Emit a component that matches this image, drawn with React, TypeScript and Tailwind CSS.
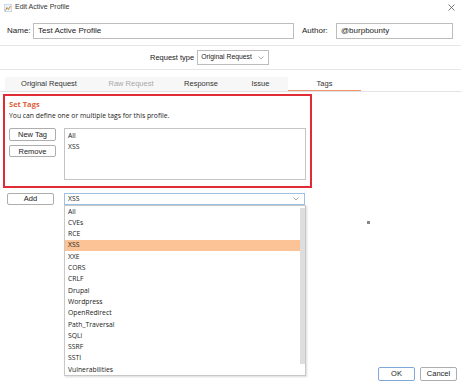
import React from "react";

const tags = [
  "All",
  "CVEs",
  "RCE",
  "XSS",
  "XXE",
  "CORS",
  "CRLF",
  "Drupal",
  "Wordpress",
  "OpenRedirect",
  "Path_Traversal",
  "SQLi",
  "SSRF",
  "SSTI",
  "Vulnerabilities",
];

function Btn({ label, className = "" }: { label: string; className?: string }) {
  return (
    <div
      className={`flex items-center justify-center rounded-[2px] border border-[#adadad] bg-white text-[7.5px] text-[#222] ${className}`}
    >
      {label}
    </div>
  );
}

function Chevron() {
  return (
    <svg width="6" height="4" viewBox="0 0 6 4" className="shrink-0">
      <path d="M0.5 0.5 L3 3 L5.5 0.5" fill="none" stroke="#8a8a8a" strokeWidth="0.7" />
    </svg>
  );
}

const listFont = { fontFamily: '"Open Sans", "Noto Sans", sans-serif' };

export default function App() {
  return (
    <div
      className="relative flex h-[384px] w-[461px] flex-col overflow-hidden bg-white text-[#222]"
      style={{ fontFamily: '"Liberation Sans", Arial, sans-serif' }}
    >
      {/* title bar */}
      <div className="flex h-[15px] items-center pl-[4px] pr-[6px]">
        <svg width="8" height="8" viewBox="0 0 8 8" className="shrink-0">
          <rect x="0" y="0" width="8" height="8" fill="#c9d8ea" />
          <rect x="1" y="1" width="6" height="6" fill="#eef3f8" />
          <path d="M1.5 6.5 L3 3.5 L4.5 5.5 L6.5 2" stroke="#c48a3a" strokeWidth="1" fill="none" />
        </svg>
        <span className="ml-[3px] text-[7px] text-[#333]">Edit Active Profile</span>
        <svg width="7" height="7" viewBox="0 0 7 7" className="ml-auto">
          <path d="M0.5 0.5 L6.5 6.5 M6.5 0.5 L0.5 6.5" stroke="#555" strokeWidth="0.8" />
        </svg>
      </div>

      {/* name / author */}
      <div className="mt-[8px] flex h-[16px] items-center pl-[7px] text-[8px]">
        <span className="w-[26px]">Name:</span>
        <div className="flex h-full w-[261px] items-center border border-[#bdbdbd] pl-[4px]">
          Test Active Profile
        </div>
        <span className="ml-[8px] w-[34px]">Author:</span>
        <div className="flex h-full w-[117px] items-center border border-[#bdbdbd] pl-[4px]">
          @burpbounty
        </div>
      </div>

      <div className="mt-[6px] h-px bg-[#e6e6e6]" />

      {/* request type */}
      <div className="mt-[4px] flex h-[15px] items-center whitespace-nowrap pl-[150px] text-[7.5px]">
        <span>Request type</span>
        <div className="ml-[3px] flex h-full w-[72px] items-center justify-between border border-[#bdbdbd] pl-[3px] pr-[4px]">
          <span className="text-[6.8px]">Original Request</span>
          <Chevron />
        </div>
      </div>

      <div className="mt-[4px] h-px bg-[#e6e6e6]" />

      {/* tabs */}
      <div className="ml-[5px] mt-[7px] flex h-[14px] w-[356px] bg-[#f7f7f7] text-[7.5px] text-[#333]">
        <div className="flex w-[88px] items-center justify-center">Original Request</div>
        <div className="flex w-[76px] items-center justify-center text-[#a8a8a8]">Raw Request</div>
        <div className="flex w-[64px] items-center justify-center">Response</div>
        <div className="flex w-[55px] items-center justify-center">Issue</div>
        <div className="flex w-[73px] items-center justify-center border-b border-[#f0926a] bg-white">Tags</div>
      </div>
      <div className="h-px bg-[#e3e3e3]" />

      {/* set tags box */}
      <div className="ml-[3px] mt-[2px] h-[94px] w-[309px] border-2 border-[#e12b35] pl-[4px] pt-[3px]">
        <div className="text-[7.5px] font-bold text-[#e0603a]" style={listFont}>
          Set Tags
        </div>
        <div className="mt-[1px] text-[6.8px]" style={listFont}>
          You can define one or multiple tags for this profile.
        </div>
        <div className="mt-[7px] flex">
          <div className="flex flex-col gap-[4px]">
            <Btn label="New Tag" className="h-[13px] w-[47px]" />
            <Btn label="Remove" className="h-[12px] w-[47px]" />
          </div>
          <div
            className="ml-[8px] h-[52px] w-[242px] border border-[#c4c4c4] pl-[3px] pt-[1px] text-[6.8px] leading-[11px]"
            style={listFont}
          >
            <div>All</div>
            <div>XSS</div>
          </div>
        </div>
      </div>

      {/* add row */}
      <div className="mt-[5px] flex h-[12px] pl-[7px]">
        <Btn label="Add" className="h-[12px] w-[47px]" />
        <div
          className="relative ml-[10px] flex h-[12px] w-[241px] items-center justify-between border border-[#9fc0e4] pl-[3px] pr-[5px] text-[6.8px]"
          style={listFont}
        >
          <span>XSS</span>
          <Chevron />
          {/* dropdown popup */}
          <div className="absolute left-[-1px] top-[11px] z-10 flex w-[242px] border border-[#c8c8c8] bg-white shadow-[1px_1px_2px_rgba(0,0,0,0.15)]">
            <div className="flex-1">
              {tags.map((t) => (
                <div
                  key={t}
                  className={`flex h-[11.3px] items-center pl-[3px] ${t === "XSS" ? "bg-[#fcc396]" : ""}`}
                >
                  {t}
                </div>
              ))}
            </div>
            <div className="w-[5px] pb-[11px] pt-[2px]">
              <div className="h-full bg-[#dedede]" />
            </div>
          </div>
        </div>
      </div>

      {/* stray glyph */}
      <div className="absolute left-[367px] top-[221px] h-[3px] w-[3px] bg-[#888]" />

      {/* footer buttons */}
      <div className="mb-[3px] mt-auto flex justify-end gap-[5px] pr-[4px]">
        <div className="flex h-[14px] w-[37px] items-center justify-center rounded-[2px] border border-[#7fa8d8] text-[7.5px]">
          OK
        </div>
        <div className="flex h-[14px] w-[37px] items-center justify-center rounded-[2px] border border-[#adadad] text-[7.5px]">
          Cancel
        </div>
      </div>
    </div>
  );
}
